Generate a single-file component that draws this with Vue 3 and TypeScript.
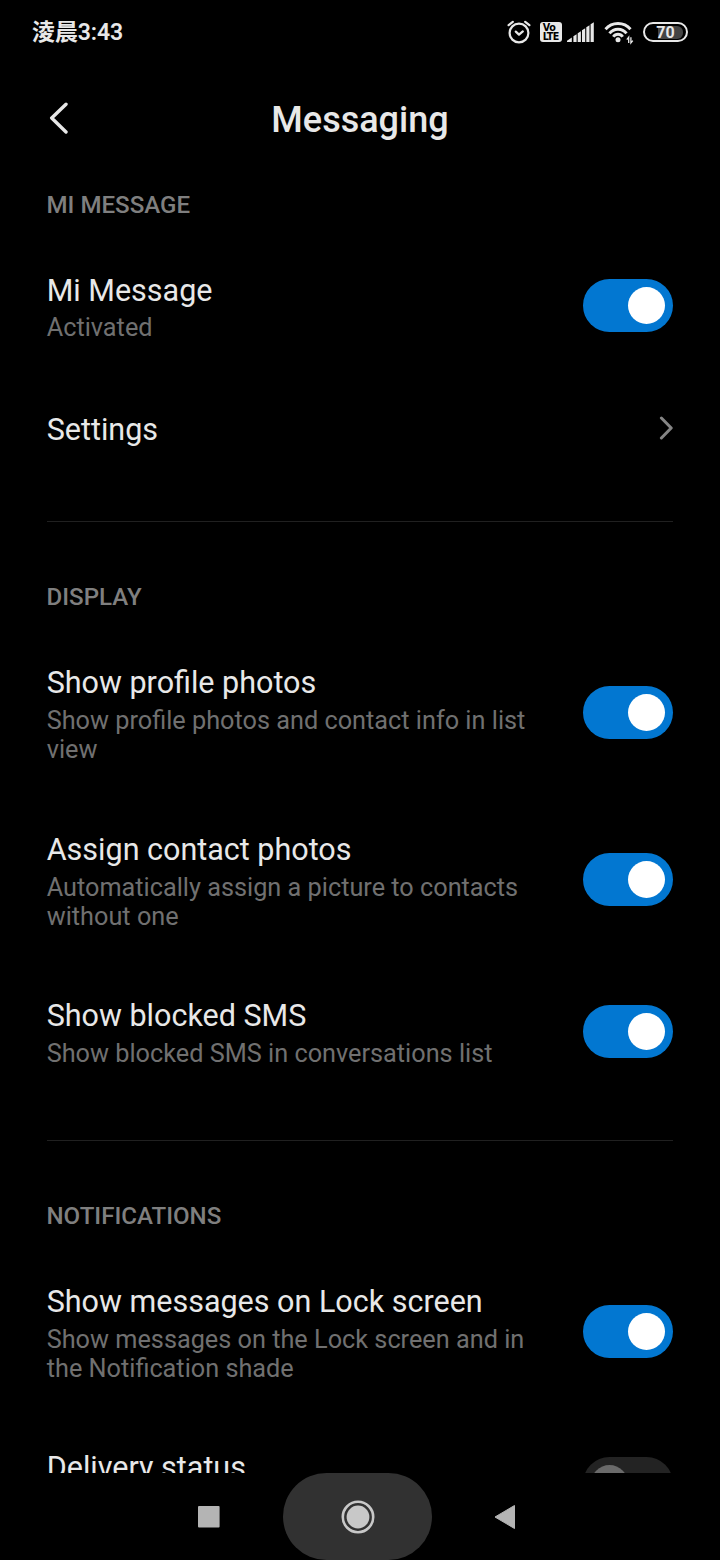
<template>
  <div class="screen">
    <header class="status-bar">
      <span class="clock">淩晨3:43</span>
      <div class="status-icons">
        <svg class="alarm" width="24" height="24" viewBox="0 0 24 24">
          <circle cx="12" cy="13" r="9.4" />
          <path d="M1.6 5.2 5.8 1.8M18.2 1.8l4.2 3.4M8.8 11.6l3.2 3 3.8-3.2" />
        </svg>
        <svg class="volte" width="22" height="20" viewBox="0 0 22 20">
          <rect width="22" height="20" rx="3" />
          <text><tspan x="2.8" y="9.2">Vo</tspan><tspan x="2.8" y="17.9">LTE</tspan></text>
        </svg>
        <svg class="signal" width="28" height="20" viewBox="0 0 28 20">
          <path d="M0 20v-1.2L4.8 15.6V20z" />
          <path
            v-for="bar in signalBars"
            :key="bar.x"
            :d="`M${bar.x} 20V${bar.y + 2}l3.2-2V20z`"
          />
        </svg>
        <svg class="wifi" width="30" height="22" viewBox="0 0 30 22">
          <path d="M1.5 8.3a16.4 16.4 0 0 1 25 0M5.5 12.4a10.7 10.7 0 0 1 17 0M9.3 15.8a5.7 5.7 0 0 1 9.4 0" />
          <circle class="wifi-dot" cx="14" cy="18.8" r="2.5" />
          <path class="wifi-arrows" d="M24.7 22v-5.8l-1.9 2.4M26.9 16.2V22l1.9-2.4" />
        </svg>
        <div class="battery">
          <span class="battery-fill"></span>
          <span class="battery-text">70</span>
        </div>
      </div>
    </header>

    <div class="title-bar">
      <button class="back" type="button" aria-label="Back">
        <svg width="22" height="34" viewBox="0 0 22 34">
          <path d="M19 2.2 4.7 16 19 30" />
        </svg>
      </button>
      <h1>Messaging</h1>
    </div>

    <main class="content">
      <section v-for="section in sections" :key="section.label" class="section">
        <h2>{{ section.label }}</h2>
        <div
          v-for="item in section.items"
          :key="item.title"
          class="row"
          :class="item.size"
          @click="toggle(item)"
        >
          <div class="row-text">
            <div class="row-title">{{ item.title }}</div>
            <div v-if="item.description" class="row-description">{{ item.description }}</div>
          </div>
          <svg v-if="item.on === undefined" class="chevron" width="14" height="24" viewBox="0 0 14 24">
            <path d="M2.4 2l9.8 10-9.8 10" />
          </svg>
          <span v-else class="switch" :class="{ on: item.on }" role="switch" :aria-checked="item.on">
            <span class="knob"></span>
          </span>
        </div>
      </section>
    </main>

    <nav class="nav-bar">
      <svg class="recents" width="22" height="22" viewBox="0 0 22 22">
        <rect width="21.6" height="21.6" rx="1" />
      </svg>
      <div class="home">
        <svg width="34" height="34" viewBox="0 0 34 34">
          <circle class="home-ring" cx="17" cy="17" r="15.2" />
          <circle cx="17" cy="17" r="11.4" />
        </svg>
      </div>
      <svg class="nav-back" width="22" height="26" viewBox="0 0 22 26">
        <path d="M1 13 20.5 1.5v23z" />
      </svg>
    </nav>
  </div>
</template>

<script setup lang="ts">
import { ref } from 'vue'

interface Item {
  title: string
  description?: string
  size: 'small' | 'medium' | 'large'
  on?: boolean
}

interface Section {
  label: string
  items: Item[]
}

const signalBars = [
  { x: 6.4, y: 12.2 },
  { x: 10.7, y: 9.2 },
  { x: 15, y: 6.2 },
  { x: 19.3, y: 3.2 },
  { x: 23.6, y: 0.2 }
]

const sections = ref<Section[]>([
  {
    label: 'MI MESSAGE',
    items: [
      { title: 'Mi Message', description: 'Activated', size: 'medium', on: true },
      { title: 'Settings', size: 'small' }
    ]
  },
  {
    label: 'DISPLAY',
    items: [
      {
        title: 'Show profile photos',
        description: 'Show profile photos and contact info in list view',
        size: 'large',
        on: true
      },
      {
        title: 'Assign contact photos',
        description: 'Automatically assign a picture to contacts without one',
        size: 'large',
        on: true
      },
      {
        title: 'Show blocked SMS',
        description: 'Show blocked SMS in conversations list',
        size: 'medium',
        on: true
      }
    ]
  },
  {
    label: 'NOTIFICATIONS',
    items: [
      {
        title: 'Show messages on Lock screen',
        description: 'Show messages on the Lock screen and in the Notification shade',
        size: 'large',
        on: true
      },
      { title: 'Delivery status', size: 'medium', on: false }
    ]
  }
])

const toggle = (item: Item) => {
  if (item.on !== undefined) {
    item.on = !item.on
  }
}
</script>

<style>
body {
  background: #000;
}
</style>

<style scoped>
.screen {
  display: flex;
  flex-direction: column;
  width: 720px;
  height: 1560px;
  overflow: hidden;
  background: #000;
  color: #e8e8e8;
  font-family: Roboto, 'Noto Sans CJK TC', sans-serif;
}

.status-bar {
  display: flex;
  flex: none;
  align-items: center;
  justify-content: space-between;
  height: 64px;
  padding: 0 32px;
}

.clock {
  padding-top: 2px;
  font-size: 23px;
  font-weight: 600;
  line-height: 28px;
  letter-spacing: -0.1px;
}

.status-icons {
  display: flex;
  align-items: center;
}

.status-icons svg {
  fill: #e8e8e8;
}

.alarm {
  margin-right: 9px;
}

.status-icons .alarm {
  fill: none;
  stroke: #e8e8e8;
  stroke-width: 2.2;
  stroke-linecap: round;
  stroke-linejoin: round;
}

.volte {
  margin-right: 5px;
}

.status-icons .volte text {
  fill: #000;
  font-family: 'DejaVu Sans', sans-serif;
  font-size: 9.6px;
  font-weight: 700;
  letter-spacing: -0.5px;
}

.signal {
  margin-right: 9px;
}

.wifi {
  margin-right: 9px;
  overflow: visible;
}

.status-icons .wifi {
  fill: none;
  stroke: #e8e8e8;
  stroke-width: 2.9;
}

.wifi .wifi-dot {
  fill: #e8e8e8;
  stroke: none;
}

.wifi .wifi-arrows {
  stroke-width: 1.3;
}

.battery {
  display: grid;
  box-sizing: border-box;
  width: 45px;
  height: 20px;
  padding: 2px 3px;
  border: 2px solid #e8e8e8;
  border-radius: 10px;
}

.battery-fill,
.battery-text {
  grid-area: 1 / 1;
}

.battery-fill {
  margin: 0 0 0 10px;
  border-radius: 0 6px 6px 0;
  background: #444;
}

.battery-text {
  z-index: 1;
  font-size: 16px;
  font-weight: 700;
  line-height: 13px;
  text-align: center;
}

.title-bar {
  display: grid;
  flex: none;
  grid-template-columns: 60px 1fr 60px;
  align-items: center;
  height: 109px;
  padding: 0 47px;
}

.back {
  display: flex;
  padding: 0;
  border: 0;
  background: none;
}

.back path {
  fill: none;
  stroke: #e8e8e8;
  stroke-width: 3.4;
  stroke-linecap: round;
  stroke-linejoin: round;
}

h1 {
  margin: 0;
  padding-top: 2px;
  font-size: 36px;
  font-weight: 500;
  line-height: 42px;
  text-align: center;
}

.content {
  flex: none;
  box-sizing: border-box;
  height: 1300px;
  padding: 0 47px;
  overflow: hidden;
}

.section {
  padding: 61px 0 40px;
  border-bottom: 1px solid #202020;
}

.section:first-child {
  padding-top: 18px;
}

h2 {
  margin: 0 0 18px -0.5px;
  color: #7f7f7f;
  font-size: 24.1px;
  font-weight: 500;
  line-height: 28px;
}

.row {
  display: flex;
  align-items: center;
  justify-content: space-between;
}

.row.small {
  height: 107px;
}

.row.medium {
  height: 137.4px;
}

.row.large {
  height: 166.7px;
}

.row-text {
  align-self: flex-start;
  width: 489px;
  margin-left: -0.3px;
  padding-top: 34.6px;
}

.small .row-text {
  padding-top: 37px;
}

.row-title {
  font-size: 30.5px;
  line-height: 37px;
}

.row-description {
  margin-top: 4.9px;
  color: #707070;
  font-size: 25.28px;
  line-height: 29.3px;
}

.chevron path {
  fill: none;
  stroke: #858585;
  stroke-width: 3;
  stroke-linecap: round;
  stroke-linejoin: round;
}

.switch {
  display: flex;
  box-sizing: border-box;
  width: 90px;
  height: 53px;
  padding: 8px;
  border-radius: 26.5px;
  background: #232323;
}

.knob {
  width: 37px;
  height: 37px;
  border-radius: 50%;
  background: #6a6a6a;
}

.switch.on {
  justify-content: flex-end;
  background: #0277d1;
}

.switch.on .knob {
  background: #fff;
}

.nav-bar {
  display: flex;
  flex: none;
  align-items: center;
  height: 87px;
  padding-left: 198px;
}

.recents {
  margin-right: 63px;
  fill: #b4b4b4;
}

.home {
  display: flex;
  align-items: center;
  justify-content: center;
  width: 149px;
  height: 87px;
  margin-right: 62px;
  border-radius: 43.5px;
  background: #313131;
}

.home circle {
  fill: #c8c8c8;
}

.home .home-ring {
  fill: none;
  stroke: #c8c8c8;
  stroke-width: 2.6;
}

.nav-back path {
  fill: #b4b4b4;
  stroke: #b4b4b4;
  stroke-width: 1;
  stroke-linejoin: round;
}
</style>
